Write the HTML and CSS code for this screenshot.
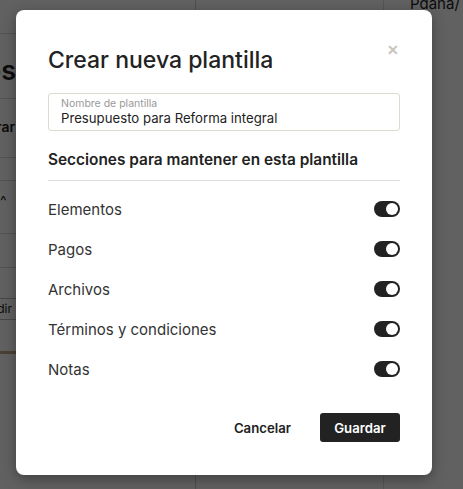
FILE: index.html
```html
<html>
<head>
<title>Crear nueva plantilla</title>
<link rel="stylesheet" href="styles.css">
</head>
<body>
<div class="page">
    <div class="side side-left">
        <div class="strip"></div>
        <div class="page-title"><h1>Presupuestos</h1></div>
        <div class="tabs"><span>Comparar</span></div>
        <div class="strip short"></div>
        <div class="strip chevron">^</div>
        <div class="strip"></div>
        <div class="add-box"><span>Añadir</span></div>
        <div class="brown-line"></div>
    </div>
    <div class="side side-mid">
        <div class="top-text">Pdana/</div>
    </div>
    <div class="side side-right">
        <div class="strip"></div>
        <div class="col-head">Fecha</div>
        <div class="strip short"></div>
        <div class="strip tiny"></div>
        <div class="config-btn">Configuración</div>
        <div class="table-box">
            <div class="handle">⠿</div>
        </div>
    </div>
</div>

<div class="overlay">
    <div class="modal">
        <div class="modal-head">
            <h2>Crear nueva plantilla</h2>
            <span class="close">&#x2715;</span>
        </div>

        <div class="field">
            <label>Nombre de plantilla</label>
            <div class="field-value">Presupuesto para Reforma integral</div>
        </div>

        <h3>Secciones para mantener en esta plantilla</h3>

        <ul class="sections">
            <li><span>Elementos</span><span class="toggle"></span></li>
            <li><span>Pagos</span><span class="toggle"></span></li>
            <li><span>Archivos</span><span class="toggle"></span></li>
            <li><span>Términos y condiciones</span><span class="toggle"></span></li>
            <li><span>Notas</span><span class="toggle"></span></li>
        </ul>

        <div class="actions">
            <button class="btn-cancel">Cancelar</button>
            <button class="btn-save">Guardar</button>
        </div>
    </div>
</div>
</body>
</html>
```

FILE: styles.css
```css
body {
    margin: 0;
    padding: 0;
    font-family: Inter, "Noto Sans", sans-serif;
    color: #222;
    background: white;
    overflow: hidden;
}

.page {
    display: flex;
    width: 463px;
    height: 489px;
    overflow: hidden;
}

.side {
    height: 489px;
}

.side-left {
    width: 195px;
    flex-shrink: 0;
    border-right: 1px solid #ccc;
    display: flex;
    flex-direction: column;
}

.side-mid {
    width: 187px;
    flex-shrink: 0;
    border-left: 1px solid #ddd;
    margin-left: 187px;
}

.side-right {
    flex: 1;
    display: flex;
    flex-direction: column;
    min-width: 80px;
}

.strip {
    height: 33px;
    border-bottom: 1px solid #d8d8d8;
}

.strip.short {
    height: 22px;
}

.strip.tiny {
    height: 22px;
}

.strip.chevron {
    height: 52px;
    font-size: 14px;
    line-height: 40px;
}

/* texts of the left column end at the modal's edge, so they are pushed right */
.page-title,
.tabs,
.add-box {
    display: flex;
    justify-content: flex-end;
    white-space: nowrap;
}

.page-title {
    height: 64px;
    padding-right: 179px;
}

.page-title h1 {
    margin: 20px 0 0 0;
    font-size: 27px;
    font-weight: 600;
}

.tabs {
    height: 58px;
    padding-right: 180px;
    border-top: 1px solid #d8d8d8;
    border-bottom: 1px solid #d8d8d8;
    font-size: 14px;
    font-weight: 600;
    line-height: 56px;
}

.add-box {
    margin-top: 30px;
    height: 20px;
    padding-right: 183px;
    border-top: 1px solid #bbb;
    border-bottom: 1px solid #bbb;
    font-size: 12px;
    line-height: 20px;
}

.brown-line {
    margin-top: 31px;
    height: 3px;
    background: #c9a88a;
}

.top-text {
    font-size: 15px;
    margin: -6px 0 0 26px;
}

.col-head {
    height: 64px;
    font-size: 14px;
    line-height: 68px;
    padding-left: 10px;
    border-bottom: 1px solid #d8d8d8;
    color: #444;
}

.config-btn {
    margin: 16px 0 0 6px;
    height: 27px;
    border: 1px solid #222;
    border-right: none;
    font-size: 13px;
    font-weight: 600;
    line-height: 27px;
    white-space: nowrap;
    overflow: hidden;
}

.table-box {
    margin: 12px 0 0 10px;
    height: 106px;
    border-left: 1px solid #ccc;
    border-top: 1px solid #ddd;
    border-bottom: 1px solid #ccc;
}

.handle {
    margin: 22px 0 0 10px;
    color: #999;
    font-size: 14px;
}

.overlay {
    position: absolute;
    left: 0;
    top: 0;
    width: 463px;
    height: 489px;
    background: rgba(0, 0, 0, 0.62);
}

.modal {
    margin: 10px 0 0 16px;
    width: 416px;
    height: 465px;
    box-sizing: border-box;
    padding: 36px 32px 0 32px;
    background: white;
    border-radius: 8px;
    box-shadow: 0 4px 14px rgba(0, 0, 0, 0.35);
    display: flex;
    flex-direction: column;
}

.modal-head {
    display: flex;
    justify-content: space-between;
    align-items: flex-start;
}

.modal-head h2 {
    margin: 0;
    font-size: 23px;
    font-weight: 500;
    line-height: 28px;
    color: #222;
}

.close {
    color: #c9c4bb;
    font-size: 14px;
    font-weight: 700;
    margin: -5px 1px 0 0;
}

.field {
    margin-top: 19px;
    border: 1px solid #ddd9cf;
    border-radius: 3px;
    padding: 3px 12px 4px 12px;
    height: 38px;
    box-sizing: border-box;
}

.field label {
    display: block;
    font-size: 10.5px;
    color: #999;
    line-height: 13px;
}

.field-value {
    font-size: 13.2px;
    line-height: 17px;
    color: #222;
}

h3 {
    margin: 19px 0 0 0;
    font-size: 15.4px;
    font-weight: 600;
    line-height: 20px;
    padding-bottom: 10px;
    border-bottom: 1px solid #e2dfda;
}

.sections {
    list-style: none;
    margin: 8px 0 0 0;
    padding: 0;
}

.sections li {
    display: flex;
    justify-content: space-between;
    align-items: center;
    height: 40px;
    font-size: 15px;
    color: #333;
}

.toggle {
    width: 26px;
    height: 16px;
    border-radius: 8px;
    background: #222;
    position: relative;
}

.toggle::after {
    content: "";
    position: absolute;
    right: 2px;
    top: 2px;
    width: 12px;
    height: 12px;
    border-radius: 50%;
    background: white;
}

.actions {
    display: flex;
    justify-content: flex-end;
    align-items: center;
    gap: 21px;
    margin-top: 24px;
}

button {
    font-family: Inter, "Noto Sans", sans-serif;
    font-size: 13.2px;
    font-weight: 600;
    border: none;
    border-radius: 3px;
    height: 29px;
    cursor: pointer;
}

.btn-cancel {
    background: white;
    color: #222;
    padding: 0 8px;
}

.btn-save {
    background: #222;
    color: white;
    width: 80px;
}
```
